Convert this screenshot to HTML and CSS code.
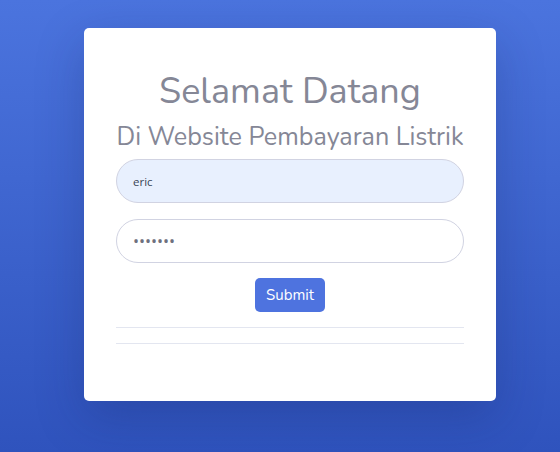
FILE: index.html
```html
<!DOCTYPE html>
<html lang="id">
<head>
  <meta charset="UTF-8">
  <meta name="viewport" content="width=device-width, initial-scale=1.0">
  <title>Login</title>
  <link rel="stylesheet" href="styles.css">
</head>
<body>
  <div class="page">
    <div class="card">
      <h1 class="title">Selamat Datang</h1>
      <h3 class="subtitle">Di Website Pembayaran Listrik</h3>
      <form class="user">
        <div class="form-group">
          <input type="text" class="form-control autofill" value="eric">
        </div>
        <div class="form-group last">
          <input type="password" class="form-control pass" value="1234567">
        </div>
        <div class="actions">
          <button type="button" class="btn-primary">Submit</button>
        </div>
        <hr>
        <hr>
      </form>
    </div>
  </div>
</body>
</html>
```

FILE: styles.css
```css
html, body {
  margin: 0;
  height: 100%;
}

body {
  background: linear-gradient(180deg, #4b74de 0%, #2f53bd 100%);
  font-family: "Nunito", "Open Sans", sans-serif;
  color: #858796;
  overflow: hidden;
}

.page {
  padding: 28px 0 0 84px;
}

.card {
  width: 412px;
  height: 373px;
  box-sizing: border-box;
  background-color: #fff;
  border-radius: 5px;
  padding: 40px 32px 0 32px;
  box-shadow: 0 16px 48px rgba(20, 30, 90, 0.25);
}

.title {
  margin: 0 0 4px 0;
  text-align: center;
  font-weight: 400;
  font-size: 36px;
  line-height: 48px;
}

.subtitle {
  margin: 0 0 5px 0;
  text-align: center;
  font-weight: 400;
  font-size: 25.2px;
  line-height: 34px;
}

.form-group {
  margin-bottom: 16px;
}

.form-group.last {
  margin-bottom: 15px;
}

.form-control {
  display: block;
  width: 100%;
  height: 44px;
  box-sizing: border-box;
  padding: 0 16px;
  border: 1px solid #d1d3e2;
  border-radius: 100px;
  font-family: "Open Sans", sans-serif;
  font-size: 11.5px;
  color: #6e707e;
  background-color: #fff;
  outline: none;
}

.form-control.autofill {
  background-color: #e8f0fe;
  color: #3a4656;
}

.form-control.pass {
  font-size: 16px;
}

.actions {
  display: flex;
  justify-content: center;
}

.btn-primary {
  width: 70px;
  height: 34px;
  padding: 0;
  border: none;
  border-radius: 5px;
  background-color: #4e73df;
  color: #fff;
  font-family: "Nunito", "Open Sans", sans-serif;
  font-size: 15px;
}

hr {
  margin: 15px 0 0 0;
  border: none;
  border-top: 1px solid #e3e6f0;
}
```
